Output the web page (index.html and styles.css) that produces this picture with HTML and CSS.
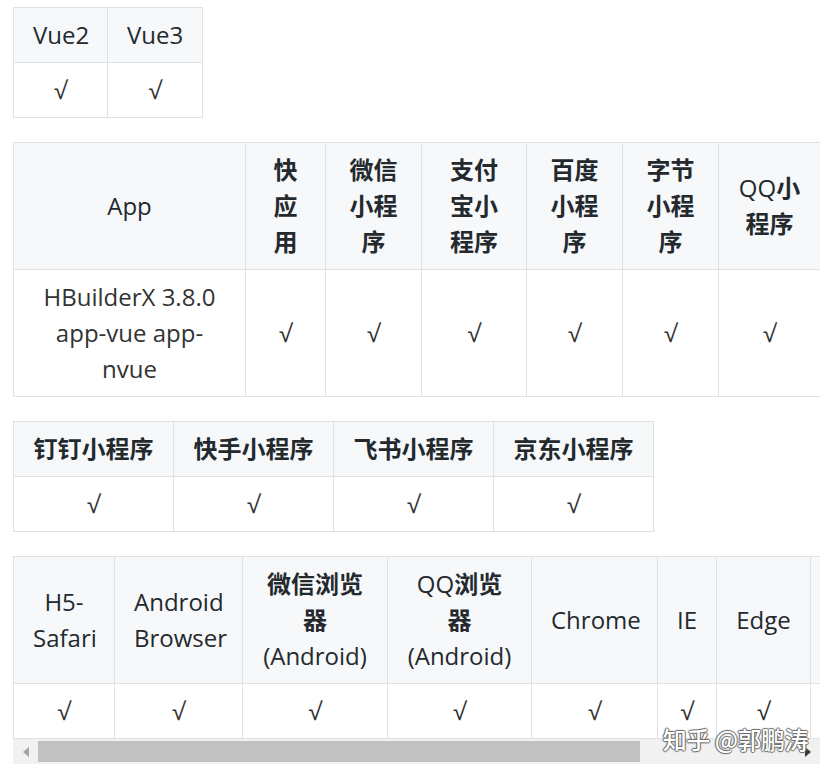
FILE: index.html
```html
<!DOCTYPE html>
<html lang="zh-CN">
<head>
<meta charset="utf-8">
<title>兼容性</title>
<link rel="stylesheet" href="styles.css">
</head>
<body>
<table class="md t-vue">
  <colgroup><col class="w94"><col class="w95"></colgroup>
  <thead><tr><th>Vue2</th><th>Vue3</th></tr></thead>
  <tbody><tr><td>√</td><td>√</td></tr></tbody>
</table>

<table class="md t-mp">
  <colgroup><col class="w232"><col class="w80"><col class="w96"><col class="w105"><col class="w96"><col class="w96"><col class="w102"></colgroup>
  <thead><tr>
    <th>App</th>
    <th><b class="zh">快应用</b></th>
    <th><b class="zh">微信小程序</b></th>
    <th><b class="zh">支付宝小程序</b></th>
    <th><b class="zh">百度小程序</b></th>
    <th><b class="zh">字节小程序</b></th>
    <th>QQ<b class="zh">小程序</b></th>
  </tr></thead>
  <tbody><tr>
    <td>HBuilderX 3.8.0 app-vue app-nvue</td>
    <td>√</td><td>√</td><td>√</td><td>√</td><td>√</td><td>√</td>
  </tr></tbody>
</table>

<table class="md t-mp2">
  <colgroup><col class="w160"><col class="w160"><col class="w160"><col class="w160"></colgroup>
  <thead><tr>
    <th><b class="zh">钉钉小程序</b></th>
    <th><b class="zh">快手小程序</b></th>
    <th><b class="zh">飞书小程序</b></th>
    <th><b class="zh">京东小程序</b></th>
  </tr></thead>
  <tbody><tr><td>√</td><td>√</td><td>√</td><td>√</td></tr></tbody>
</table>

<div class="scroller">
  <div class="viewport">
    <table class="md t-web">
      <colgroup><col class="w101"><col class="w128"><col class="w145"><col class="w144"><col class="w126"><col class="w59"><col class="w94"><col class="w120"><col class="w115"></colgroup>
      <thead><tr>
        <th>H5-Safari</th>
        <th>Android Browser</th>
        <th><b class="zh">微信浏览器</b> (Android)</th>
        <th>QQ<b class="zh">浏览器</b> (Android)</th>
        <th>Chrome</th>
        <th>IE</th>
        <th>Edge</th>
        <th>Firefox</th>
        <th>PC Safari</th>
      </tr></thead>
      <tbody><tr><td>√</td><td>√</td><td>√</td><td>√</td><td>√</td><td>√</td><td>√</td><td>√</td><td>√</td></tr></tbody>
    </table>
  </div>
  <div class="hbar">
    <span class="arrow arrow-left"></span>
    <div class="track"><div class="thumb"></div></div>
    <span class="arrow arrow-right"></span>
  </div>
  <div class="watermark">知乎 @郭鹏涛</div>
</div>
</body>
</html>
```

FILE: styles.css
```css
html, body {
  background: #ffffff;
}
body {
  margin: 7px 10px 0 13px;
  font-family: "Open Sans", "Noto Sans CJK SC", sans-serif;
  font-size: 24px;
  line-height: 36px;
  color: #24292e;
}
.md {
  border-collapse: collapse;
  border-spacing: 0;
  table-layout: fixed;
  margin: 0 0 24px 0;
}
.md th, .md td {
  border: 1px solid #dfe2e5;
  padding: 9px 19px;
  text-align: center;
  vertical-align: middle;
  overflow: hidden;
}
.md th {
  background: #f6f8fa;
  font-weight: 400;
}
.md td {
  background: #ffffff;
  color: #333333;
}
.zh {
  font-family: "Noto Sans CJK SC", sans-serif;
  font-weight: 700;
  line-height: 24px;
}
.t-vue { width: 189px; }
.t-mp { width: 807px; }
.t-mp2 { width: 640px; }
.t-web { width: 1032px; margin: 0; }

.w59 { width: 59px; }
.w80 { width: 80px; }
.w94 { width: 94px; }
.w95 { width: 95px; }
.w96 { width: 96px; }
.w101 { width: 101px; }
.w102 { width: 102px; }
.w105 { width: 105px; }
.w115 { width: 115px; }
.w120 { width: 120px; }
.w126 { width: 126px; }
.w128 { width: 128px; }
.w144 { width: 144px; }
.w145 { width: 145px; }
.w160 { width: 160px; }
.w232 { width: 232px; }

.scroller {
  position: relative;
  width: 807px;
}
.viewport {
  overflow: hidden;
  width: 807px;
}
.hbar {
  display: flex;
  align-items: center;
  height: 25px;
  background: #f1f1f1;
}
.arrow {
  width: 25px;
  height: 25px;
  display: flex;
  align-items: center;
  justify-content: center;
  flex: none;
}
.arrow::before {
  content: "";
  width: 0;
  height: 0;
  border-top: 5px solid transparent;
  border-bottom: 5px solid transparent;
}
.arrow-left::before {
  border-right: 6px solid #a3a3a3;
}
.arrow-right::before {
  border-left: 6px solid #3c3c3c;
}
.track {
  flex: 1;
  height: 21px;
  display: flex;
}
.thumb {
  width: 602px;
  height: 21px;
  background: #c1c1c1;
}
.watermark {
  position: absolute;
  right: 12px;
  bottom: 13px;
  font-family: "Noto Sans CJK SC", sans-serif;
  font-size: 24px;
  line-height: 24px;
  font-weight: 500;
  color: #ffffff;
  letter-spacing: -0.5px;
  text-shadow: 1px 0 1px #666, -1px 0 1px #666, 0 1px 1px #666, 0 -1px 1px #666;
}
```
